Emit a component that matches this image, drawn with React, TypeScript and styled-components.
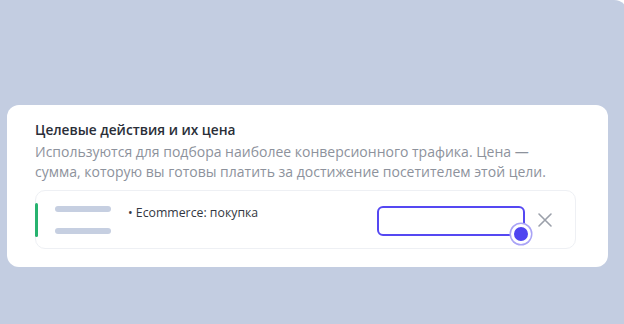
import styled, { createGlobalStyle } from "styled-components";

const GlobalStyle = createGlobalStyle`
  html, body {
    margin: 0;
    padding: 0;
    background: #ffffff;
    overflow: hidden;
  }
  body {
    font-family: "Open Sans", "Noto Sans", sans-serif;
  }
`;

const Page = styled.div`
  width: 628px;
  height: 324px;
  box-sizing: border-box;
  padding: 105px 20px 0 7px;
  background: #c3cde1;
  border-top-right-radius: 14px;
`;

const Card = styled.section`
  height: 162px;
  box-sizing: border-box;
  padding: 16px 32px 0 28px;
  background: #ffffff;
  border-radius: 12px;
`;

const Title = styled.h2`
  margin: 0;
  font-size: 13.7px;
  line-height: 18px;
  font-weight: 600;
  color: #2a2e38;
`;

const Description = styled.p`
  margin: 3px 0 0;
  font-size: 14px;
  line-height: 20px;
  color: #8d929c;
`;

const GoalRow = styled.div`
  margin-top: 8px;
  height: 59px;
  box-sizing: border-box;
  display: flex;
  align-items: center;
  border: 1px solid #eef0f4;
  border-radius: 10px;
`;

const Accent = styled.div`
  width: 3px;
  height: 34px;
  margin-left: -1px;
  background: #27b36f;
  border-radius: 2px;
`;

const Placeholder = styled.div`
  display: flex;
  flex-direction: column;
  gap: 16px;
  margin-left: 17px;
`;

const Bar = styled.div`
  width: 56px;
  height: 6px;
  border-radius: 3px;
  background: #c6cfe1;
`;

const GoalName = styled.div`
  align-self: flex-start;
  margin: 14px 0 0 17px;
  flex: 1;
  font-size: 12.3px;
  line-height: 16px;
  color: #333742;
`;

const PriceWrap = styled.div`
  position: relative;
  margin-top: 2px;
`;

const PriceInput = styled.div`
  width: 148px;
  height: 30px;
  box-sizing: border-box;
  border: 2px solid #5548f2;
  border-radius: 6px;
  background: #fff;
`;

const Handle = styled.span`
  position: absolute;
  right: -6px;
  bottom: -8px;
  width: 20px;
  height: 20px;
  box-sizing: border-box;
  border-radius: 50%;
  background: #4f45f0;
  border: 3px solid #ffffff;
  box-shadow: 0 0 0 1.5px #a9a3f6;
`;

const Remove = styled.button`
  margin: 0 22px 0 12px;
  padding: 0;
  border: none;
  background: none;
  display: flex;
  align-items: center;
`;

export default function App() {
  return (
    <>
      <GlobalStyle />
      <Page>
        <Card>
          <Title>Целевые действия и их цена</Title>
          <Description>
            Используются для подбора наиболее конверсионного трафика. Цена —
            <br />
            сумма, которую вы готовы платить за достижение посетителем этой цели.
          </Description>
          <GoalRow>
            <Accent />
            <Placeholder>
              <Bar />
              <Bar />
            </Placeholder>
            <GoalName>• Ecommerce: покупка</GoalName>
            <PriceWrap>
              <PriceInput />
              <Handle />
            </PriceWrap>
            <Remove>
              <svg width="16" height="16" viewBox="0 0 16 16">
                <path d="M2 2L14 14M14 2L2 14" stroke="#9ba0aa" strokeWidth="1.6" strokeLinecap="round" />
              </svg>
            </Remove>
          </GoalRow>
        </Card>
      </Page>
    </>
  );
}
